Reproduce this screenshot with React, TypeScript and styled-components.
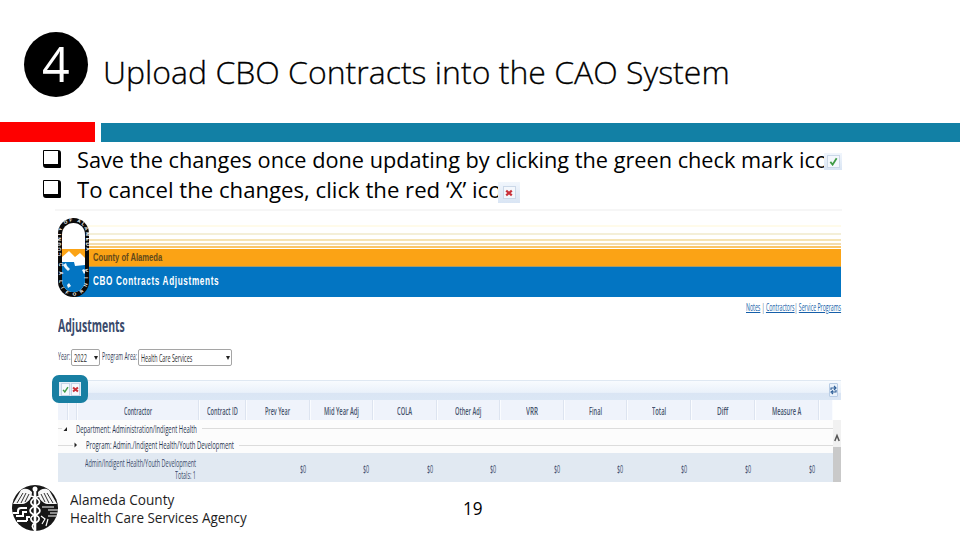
import { useLayoutEffect, useRef, useState } from "react"
import type { ReactNode } from "react"
import styled, { createGlobalStyle } from "styled-components"

type FitProps = {
  width: number,
  children: ReactNode
}

type BoxProps = {
  $w: number
}

type LineProps = {
  $top: number;
  $h: number;
  $color: string;
}

const GlobalStyle = createGlobalStyle`
  body {
    margin: 0;
    background: #fff;
    font-family: "Open Sans", "Noto Sans", sans-serif;
    color: #000;
  }
  * {
    box-sizing: border-box;
  }
`;

const FitBox = styled.span<BoxProps>`
  display: inline-block;
  flex-shrink: 0;
  vertical-align: top;
  width: ${({$w}) => $w}px;
  white-space: nowrap;
`;
const FitInner = styled.span`
  display: inline-block;
  vertical-align: top;
  transform-origin: left center;
`;

// Squeezes one line of text into a fixed width
const Fit = ({width, children}: FitProps) => {
  const ref = useRef<HTMLSpanElement>(null)
  const [scale, setScale] = useState(1)
  useLayoutEffect(() => {
    if (ref.current) setScale(width / ref.current.offsetWidth)
  }, [width])
  return (
    <FitBox $w={width}>
      <FitInner ref={ref} style={{ transform: `scaleX(${scale})` }}>{children}</FitInner>
    </FitBox>
  )
}

const Slide = styled.main`
  width: 960px;
  height: 540px;
  overflow: hidden;
  display: flex;
  flex-direction: column;
  background: #fff;
`;

const Header = styled.header`
  height: 122px;
  display: flex;
  align-items: flex-start;
  padding: 32px 0 0 24px;
`;
const StepNumber = styled.div`
  width: 64px;
  height: 65px;
  border-radius: 50%;
  background: #000;
  color: #fff;
  font-size: 50px;
  line-height: 62px;
  display: flex;
  justify-content: center;
  margin-right: 15px;
`;
const Title = styled.h1`
  margin: 19px 0 0;
  font-size: 32px;
  font-weight: 300;
  line-height: 41px;
  -webkit-text-stroke: 0.3px #000;
`;

const Bars = styled.div`
  display: flex;
  gap: 6px;
  height: 20px;
`;
const RedBar = styled.div`
  width: 95px;
  background: #fe0000;
`;
const TealBar = styled.div`
  flex: 1;
  margin-top: 1px;
  background: #1280a5;
`;

const Steps = styled.ul`
  list-style: none;
  margin: 0;
  padding: 4px 0 0 43px;
  height: 67px;
`;
const Step = styled.li`
  display: flex;
  align-items: flex-start;
  height: 30px;
  font-size: 21px;
  line-height: 29px;
`;
const BulletBox = styled.span`
  width: 18px;
  height: 18px;
  margin: 4px 16px 0 0;
  border: solid #000;
  border-width: 1px 3px 4px 1px;
  border-radius: 1px 3px 1px 3px;
`;
const StepText = styled.span`
  position: relative;
  display: flex;
`;
const StepIcon = styled.span<{ $left: number, $size: number, $top: number }>`
  position: absolute;
  left: ${({$left}) => $left}px;
  top: ${({$top}) => $top}px;
  width: ${({$size}) => $size}px;
  height: ${({$size}) => $size - 1}px;
  background: linear-gradient(#f1f6fc, #d9e5f4);
  display: flex;
  align-items: center;
  justify-content: center;
`;
const IconFrame = styled.span`
  width: 13px;
  height: 13px;
  border: 1px solid #cbd8e8;
  background: #f3f7fc;
  display: flex;
  align-items: center;
  justify-content: center;
`;

const Shot = styled.section`
  width: 787px;
  height: 273px;
  margin-left: 55px;
  display: flex;
  flex-direction: column;
  border-top: 2px solid #f6f6f6;
`;

const Banner = styled.div`
  height: 86px;
  display: flex;
  align-items: flex-end;
  padding: 0 1px 0 3px;
`;
const SealWrap = styled.div`
  width: 17px;
  height: 79px;
  flex-shrink: 0;
  svg {
    display: block;
    position: relative;
    z-index: 1;
  }
`;
const BannerBody = styled.div`
  flex: 1;
  height: 86px;
  display: flex;
  flex-direction: column;
`;
const Stripes = styled.div`
  position: relative;
  height: 38px;
`;
const Stripe = styled.i<LineProps>`
  position: absolute;
  left: 0;
  right: 0;
  top: ${({$top}) => $top}px;
  height: ${({$h}) => $h}px;
  background: ${({$color}) => $color};
`;
const OrangeBand = styled.div`
  height: 18px;
  background: #fba315;
  border-bottom: 1px solid #a79a68;
  padding-left: 18px;
  font: bold 10.5px/17px "Liberation Sans", sans-serif;
  color: #62491b;
`;
const BlueBand = styled.div`
  height: 30px;
  background: #0375c2;
  padding-left: 18px;
  font: bold 12.5px/29px "Liberation Sans", sans-serif;
  letter-spacing: 1px;
  color: #fff;
`;

const Links = styled.nav`
  height: 22px;
  display: flex;
  justify-content: flex-end;
  padding-right: 1px;
  font-size: 10px;
  line-height: 20px;
  color: #34547c;
  u {
    color: #165fa9;
  }
`;
const PageTitle = styled.h2`
  margin: 0;
  padding-left: 3px;
  height: 29px;
  font-size: 17.5px;
  line-height: 13px;
  font-weight: 700;
  color: #3b4b6c;
`;
const Filters = styled.div`
  height: 32px;
  padding-left: 3px;
  display: flex;
  align-items: flex-start;
  font-size: 10px;
  line-height: 16px;
  color: #35415a;
`;
const Select = styled.div<BoxProps>`
  width: ${({$w}) => $w}px;
  height: 17px;
  margin: 1px 2px 0 1px;
  padding: 0 1px 0 2px;
  border: 1px solid #a5a5a5;
  border-radius: 2px;
  display: flex;
  justify-content: space-between;
  line-height: 16px;
  color: #2e2e2e;
  &::after {
    content: "";
    margin-top: 6px;
    border: 2.5px solid transparent;
    border-top: 4px solid #222;
  }
`;

const Toolbar = styled.div`
  position: relative;
  height: 20px;
  margin-right: 1px;
  padding-right: 3px;
  display: flex;
  align-items: center;
  justify-content: flex-end;
  border-top: 1px solid #dfe8f2;
  background: linear-gradient(#f8fbfe, #eaf1fa 60%, #dae5f4 64%, #dbe7f5);
`;
const RefreshButton = styled.span`
  width: 9px;
  height: 14px;
  margin-bottom: 2px;
  border: 1px solid #b9cde5;
  border-radius: 1px;
  background: #eaf2fb;
  display: flex;
  align-items: center;
  justify-content: center;
`;
const Callout = styled.div`
  position: absolute;
  left: -3px;
  top: -6px;
  width: 36px;
  height: 28px;
  border: 7px solid #187fa2;
  border-radius: 7px;
  background: #e5eef8;
  display: flex;
  gap: 1px;
  align-items: center;
  justify-content: center;
`;
const ToolButton = styled.span`
  width: 9px;
  height: 13px;
  background: #f6f9fd;
  border: 1px solid #c7d4e6;
  display: flex;
  align-items: center;
  justify-content: center;
`;

const columns = "10px 9px 122px 47px 64px 63px 64px 63px 64px 63px 64px 64px 64px 13px";

const Grid = styled.div`
  width: 778px;
  padding-left: 3px;
`;
const HeadRow = styled.div`
  display: grid;
  grid-template-columns: ${columns};
  height: 20px;
  background: #eff3fb;
`;
const HeadCell = styled.div`
  display: flex;
  justify-content: center;
  border-right: 1px solid #dde4f0;
  box-shadow: 1px 0 #fafcff;
  font-size: 10px;
  font-weight: 600;
  line-height: 22px;
  color: #46536d;
  &:last-child {
    border: 0;
  }
`;
const Scroller = styled.div`
  display: flex;
  height: 62px;
`;
const GroupRow = styled.div<{ $h: number, $indent: number }>`
  height: ${({$h}) => $h}px;
  background: #fcfcfc;
  display: flex;
  align-items: center;
  font-size: 10.5px;
  line-height: 16px;
  color: #27344f;
  &::after {
    content: "";
    flex: 1;
    height: 1px;
    margin-left: 5px;
    background: #dcdcdc;
  }
  &::before {
    content: "";
    width: ${({$indent}) => $indent}px;
    height: 1px;
    background: #dcdcdc;
  }
`;
const Marker = styled.svg`
  margin: 0 8px 0 1px;
`;
const TotalsRow = styled.div`
  display: grid;
  grid-template-columns: ${columns};
  height: 29px;
  background: #e1e9f2;
  font-size: 10px;
  color: #3a4a68;
`;
const TotalsLabel = styled.div`
  grid-column: 1 / 4;
  display: flex;
  flex-direction: column;
  align-items: flex-end;
  padding: 4px 3px 0 0;
  line-height: 12px;
  height: 29px;
`;
const Amount = styled.div`
  display: flex;
  justify-content: flex-end;
  padding-right: 4px;
  line-height: 32px;
`;
const Scrollbar = styled.div`
  width: 8px;
  background: #f1f1f1;
  display: flex;
  flex-direction: column;
  svg {
    margin: 13px 0 0 1px;
    height: 14px;
  }
`;
const Thumb = styled.div`
  flex: 1;
  background: #c9c9c9;
`;

const Footer = styled.footer`
  display: flex;
  align-items: flex-start;
  padding: 3px 0 0 12px;
`;
const Agency = styled.div`
  display: flex;
  flex-direction: column;
  margin: 6px 0 0 12px;
  width: 393px;
  font-size: 14px;
  line-height: 18px;
  color: #1e1e1e;
`;
const PageNumber = styled.span`
  font-size: 18px;
  line-height: 24px;
  margin-top: 11px;
`;

const Check = ({size}: { size: number }) => (
  <svg width={size} height={size} viewBox="0 0 10 10">
    <path d="M1.5 5.5 L4 8.5 L8.5 1.5" fill="none" stroke="#3f9b45" strokeWidth="2" />
  </svg>
)

const Cross = ({size}: { size: number }) => (
  <svg width={size} height={size} viewBox="0 0 10 10">
    <path d="M1.5 2 L8.5 8 M8.5 2 L1.5 8" fill="none" stroke="#c93038" strokeWidth="2.8" />
  </svg>
)

const CountySeal = () => (
  <svg width="31" height="79" viewBox="0 0 31 79">
    <rect width="31" height="79" rx="15.5" fill="#0a0a0a" />
    <clipPath id="inside"><rect x="4" y="5" width="23" height="69" rx="11.5" /></clipPath>
    <g clipPath="url(#inside)">
      <rect width="31" height="79" fill="#fff" />
      <rect y="31" width="31" height="14" fill="#fba315" />
      <rect y="43" width="31" height="36" fill="#0375c2" />
      <path d="M3 40 L11 33 L17 39 L22 35 L28 41 V47 L17 48 L16 44 L3 44 Z" fill="#fff" />
      <path d="M5 47 l3 -2 l1 3 l3 3 l-2 2 l-3 -3 Z M24 52 l2 -1 l2 3 l-2 2 Z M9 67 l2 -2 l2 3 l-3 2 Z" fill="#eef6fb" />
    </g>
    <path id="ringTop" d="M3.3 38 V15.5 A12.2 12.2 0 0 1 27.7 15.5 V40" fill="none" />
    <path id="ringBottom" d="M1.2 45 V63.5 A14.3 14.3 0 0 0 29.8 63.5 V45" fill="none" />
    <g fontFamily="Liberation Sans, sans-serif" fontSize="4.6" fontWeight="bold" fill="#fff">
      <text textLength="78"><textPath href="#ringTop">COUNTY OF ALAMEDA</textPath></text>
      <text textLength="76"><textPath href="#ringBottom">CALIFORNIA</textPath></text>
    </g>
  </svg>
)

const AgencyLogo = () => (
  <svg width="46" height="46" viewBox="0 0 46 46">
    <clipPath id="disc"><circle cx="23" cy="23" r="23" /></clipPath>
    <g clipPath="url(#disc)">
      <rect width="46" height="46" fill="#171717" />
      <path d="M1 19 L9 5 C14 2 18 5 20 7 C20 13 16 18 11 19 Z M45 19 L37 5 C32 2 28 5 26 7 C26 13 30 18 35 19 Z" fill="#f6f6f6" />
      <path d="M5 18 L11 8 M9 18 L14 8 M13 17 L17 9 M41 18 L35 8 M37 18 L32 8 M33 17 L29 9" stroke="#171717" strokeWidth="0.9" />
      <path d="M15 23 H9 Q6 23 6 26 V28 H0 M15 27 H11 V31 H4 M15 36 H5 M18 32 H15 V36" fill="none" stroke="#fff" strokeWidth="2" />
      <path d="M30 22 H42 M36 25 H46 M38 28 H46 M36 31 H46 M29 31 L33 34 L30 39 M36 34 L34 41" fill="none" stroke="#fff" strokeWidth="1.2" />
      <path d="M23 3 V46" stroke="#fff" strokeWidth="2.6" />
      <path d="M19 11 C30 14 29 19 23 21 C16 24 17 28 23 30 C29 32 28 36 23 38 C19 40 20 43 23 45 M28 11 C17 14 17 19 23 21 C30 24 29 28 23 30 C17 32 18 36 23 38" fill="none" stroke="#fff" strokeWidth="1.7" />
      <circle cx="23" cy="4" r="2.5" fill="#fff" />
    </g>
  </svg>
)

const stripes = [
  { top: 14, h: 2, color: "#fffbea" },
  { top: 22, h: 2, color: "#f4efd8" },
  { top: 28, h: 2, color: "#f5e3b4" },
  { top: 32, h: 2, color: "#f3dcae" },
  { top: 35, h: 2, color: "#fbc568" },
]

const heads: [string, number][] = [
  ["", 0], ["", 0], ["Contractor", 28], ["Contract ID", 31], ["Prev Year", 25],
  ["Mid Year Adj", 35], ["COLA", 15], ["Other Adj", 26], ["VRR", 12],
  ["Final", 13], ["Total", 14], ["Diff", 11], ["Measure A", 29], ["", 0],
]

export default function App() {
  return (
    <Slide>
      <GlobalStyle />
      <Header>
        <StepNumber><Fit width={28}>4</Fit></StepNumber>
        <Title><Fit width={627}>Upload CBO Contracts into the CAO System</Fit></Title>
      </Header>
      <Bars>
        <RedBar />
        <TealBar />
      </Bars>
      <Steps>
        <Step>
          <BulletBox />
          <StepText>
            <Fit width={764}>Save the changes once done updating by clicking the green check mark icon</Fit>
            <StepIcon $left={747} $top={7} $size={18}>
              <IconFrame><Check size={9} /></IconFrame>
            </StepIcon>
          </StepText>
        </Step>
        <Step>
          <BulletBox />
          <StepText>
            <Fit width={438}>To cancel the changes, click the red ‘X’ icon</Fit>
            <StepIcon $left={421} $top={6} $size={22}>
              <IconFrame><Cross size={8} /></IconFrame>
            </StepIcon>
          </StepText>
        </Step>
      </Steps>
      <Shot>
        <Banner>
          <SealWrap><CountySeal /></SealWrap>
          <BannerBody>
            <Stripes>
              {stripes.map((s) => <Stripe key={s.top} $top={s.top} $h={s.h} $color={s.color} />)}
            </Stripes>
            <OrangeBand><Fit width={69}>County of Alameda</Fit></OrangeBand>
            <BlueBand><Fit width={126}>CBO Contracts Adjustments</Fit></BlueBand>
          </BannerBody>
        </Banner>
        <Links>
          <Fit width={95}><u>Notes</u> | <u>Contractors</u>| <u>Service Programs</u></Fit>
        </Links>
        <PageTitle><Fit width={67}>Adjustments</Fit></PageTitle>
        <Filters>
          <Fit width={12}>Year:</Fit>
          <Select $w={29}><Fit width={13}>2022</Fit></Select>
          <Fit width={35}>Program Area:</Fit>
          <Select $w={94}><Fit width={51}>Health Care Services</Fit></Select>
        </Filters>
        <Toolbar>
          <Callout>
            <ToolButton><Check size={7} /></ToolButton>
            <ToolButton><Cross size={7} /></ToolButton>
          </Callout>
          <RefreshButton>
            <svg width="7" height="10" viewBox="0 0 7 10">
              <path d="M1 5 V3 H5 M4 1 L6 3 L4 5 M6 5 V7 H2 M3 5.5 L1 7 L3 9" fill="none" stroke="#2f5f98" strokeWidth="1.1" />
            </svg>
          </RefreshButton>
        </Toolbar>
        <Grid>
          <HeadRow>
            {heads.map(([label, width], i) => (
              <HeadCell key={i}>{label && <Fit width={width}>{label}</Fit>}</HeadCell>
            ))}
          </HeadRow>
        </Grid>
        <Scroller>
          <Grid>
            <GroupRow $h={17} $indent={4}>
              <Marker width="5" height="6"><path d="M4 1 V5 H0.5 Z" fill="#222" /></Marker>
              <Fit width={121}>Department: Administration/Indigent Health</Fit>
            </GroupRow>
            <GroupRow $h={16} $indent={15}>
              <Marker width="4" height="6"><path d="M0.5 0.5 L3 3 L0.5 5.5 Z" fill="#222" /></Marker>
              <Fit width={148}>Program: Admin./Indigent Health/Youth Development</Fit>
            </GroupRow>
            <TotalsRow>
              <TotalsLabel>
                <Fit width={111}>Admin/Indigent Health/Youth Development</Fit>
                <Fit width={21}>Totals: 1</Fit>
              </TotalsLabel>
              <span />
              {heads.slice(4, 13).map(([label]) => (
                <Amount key={label}><Fit width={6}>$0</Fit></Amount>
              ))}
            </TotalsRow>
          </Grid>
          <Scrollbar>
            <svg width="6" height="14"><path d="M0.8 8 L3 2.5 L5.2 8" fill="none" stroke="#555" strokeWidth="1.5" /></svg>
            <Thumb />
          </Scrollbar>
        </Scroller>
      </Shot>
      <Footer>
        <AgencyLogo />
        <Agency>
          <Fit width={104}>Alameda County</Fit>
          <Fit width={177}>Health Care Services Agency</Fit>
        </Agency>
        <PageNumber><Fit width={20}>19</Fit></PageNumber>
      </Footer>
    </Slide>
  )
}
